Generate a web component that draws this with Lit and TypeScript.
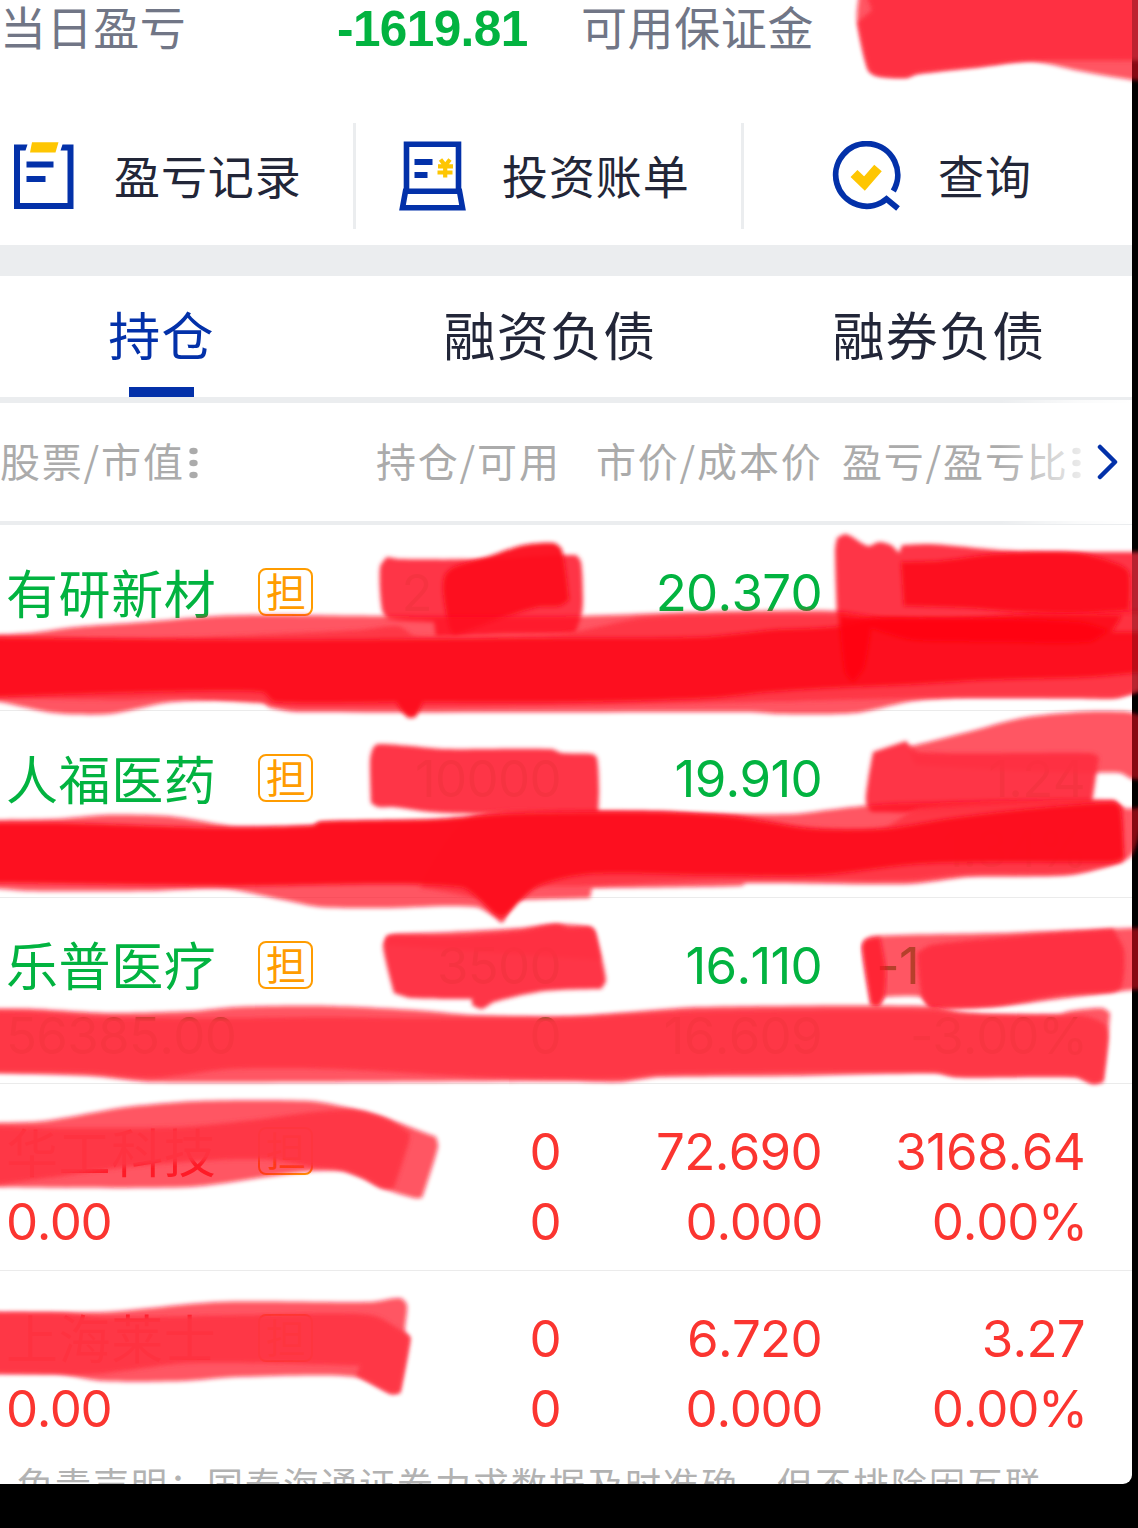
import { LitElement, html, css, svg } from "lit";
import { customElement, property } from "lit/decorators.js";

interface Holding {
  name: string;
  trend: "up" | "down";
  value: string;
  qty: string;
  avail: string;
  price: string;
  cost: string;
  profit: string;
  ratio: string;
  qtyCut?: boolean;
  profitCut?: boolean;
}

const HOLDINGS: Holding[] = [
  { name: "有研新材", trend: "down", value: "", qty: "2", avail: "", price: "20.370", cost: "", profit: "", ratio: "", qtyCut: true },
  { name: "人福医药", trend: "down", value: "", qty: "10000", avail: "", price: "19.910", cost: "", profit: "1.24", ratio: "1.34%" },
  { name: "乐普医疗", trend: "down", value: "56385.00", qty: "3500", avail: "0", price: "16.110", cost: "16.609", profit: "-1", ratio: "-3.00%", profitCut: true },
  { name: "华工科技", trend: "up", value: "0.00", qty: "0", avail: "0", price: "72.690", cost: "0.000", profit: "3168.64", ratio: "0.00%" },
  { name: "上海莱士", trend: "up", value: "0.00", qty: "0", avail: "0", price: "6.720", cost: "0.000", profit: "3.27", ratio: "0.00%" },
];

/* Marker strokes, in paint order: tone name and outline points. */
const MARKS: [string, string][] = [
  // top right
  ["light", "859,-5 857,20 868,70 877,76 906,78 917,74 980,67 1030,61 1080,71 1132,80 1145,81 1145,-5"],
  ["solid", "866,-5 872,10 858,22 869,69 877,75 906,77 917,73 980,66 1030,61 1145,61 1145,-5"],
  // row 1 quantity
  ["solid", "380,567 387,557 400,559 487,559 575,555 581,562 583,597 582,613 575,634 500,634 436,637 434,622 389,619 382,610"],
  ["dark", "445,575 454,567 487,557 523,545 554,543 562,550 569,600 560,606 538,607 502,618 469,630 454,635 449,627 443,590"],
  // row 1 profit
  ["solid", "835,550 837,538 846,534 868,546 879,542 891,545 899,553 902,545 931,544 1015,551 1145,552 1145,640 838,640"],
  ["dark", "901,562 939,561 997,554 1077,553 1120,565 1129,573 1129,610 1080,613 1022,612 968,608 904,606"],
  // row 1 bar
  ["light", "-8,635 30,633 76,627 145,622 218,616 273,615 382,616 575,616 702,612 837,611 900,620 1132,611 1145,611 1145,690 1117,698 1070,698 960,698 913,701 855,713 779,714 750,712 298,712 269,707 262,700 189,701 164,703 109,714 55,713 0,702 -8,702"],
  ["mid", "-8,637 60,637 170,638 360,630 398,626 416,636 560,634 650,617 840,615 900,620 1140,613 1140,690 1117,697 1085,697 960,697 913,698 760,702 568,706 298,708 268,704 180,698 120,700 -8,698"],
  ["dark", "-8,638 262,640 570,638 702,637 772,630 833,627 880,618 960,619 1040,614 1122,615 1112,632 1145,632 1145,672 1091,677 986,680 920,684 830,688 768,692 710,698 570,702 423,702 416,717 409,718 405,715 396,702 275,702 262,692 150,692 -8,697"],
  ["deep", "839,615 871,618 960,618 1080,622 1108,630 1090,642 1000,642 913,640 871,628 864,668 853,682 845,672"],
  // row 2 quantity
  ["solid", "370,760 373,748 378,744 411,746 443,749 551,749 562,753 592,754 597,758 599,790 598,816 473,814 429,812 393,807 378,807 371,803"],
  // row 2 profit
  ["light", "908,747 968,732 1022,718 1077,712 1128,712 1145,717 1145,780 1132,779 1120,773 1085,773 1000,770 915,765"],
  ["solid", "873,752 906,741 919,752 1091,753 1099,757 1091,810 873,812 866,803 868,780"],
  // row 2 bar
  ["light", "-8,820 55,819 105,815 167,816 196,820 233,826 313,825 320,822 436,819 509,813 570,811 659,811 706,814 793,814 844,808 899,803 1113,800 1122,808 1145,807 1138,840 1132,855 1122,862 1070,875 968,877 910,884 746,883 741,886 592,888 590,898 516,900 502,923 476,907 382,908 320,907 284,900 225,889 145,891 29,891 -8,888"],
  ["mid", "470,818 570,812 730,815 811,827 884,827 920,808 1113,801 1124,808 1122,862 1070,873 968,874 910,880 746,880 580,886 526,890 502,922 480,900 420,888"],
  ["dark", "-8,823 65,823 233,828 313,826 320,822 436,820 509,814 659,813 732,817 811,829 884,829 953,818 1040,808 1113,803 1120,808 1124,858 1112,862 1004,862 917,864 819,875 699,875 590,874 538,886 505,915 497,915 460,887 233,886 -8,883"],
  // row 3 quantity
  ["light", "385,945 387,936 396,934 451,932 520,928 556,924 590,927 595,932 600,960"],
  ["solid", "383,947 387,936 396,935 451,936 520,931 556,924 570,928 590,927 595,932 606,980 601,989 545,991 494,1002 482,1009 472,1005 472,999 411,998 394,993"],
  // row 3 profit
  ["light", "862,947 865,940 873,936 1000,933 1132,928 1145,928 1145,989 1113,992 997,1006 931,1007 922,997 884,997 879,1006 871,1005"],
  ["light", "862,947 865,940 880,937 886,970 884,997 879,1006 871,1005"],
  ["solid", "917,953 931,945 1011,937 1113,929 1124,950 1122,986 1113,992 1060,995 997,1006 931,1007 922,997"],
  // row 3 bar
  ["light", "-8,1009 33,1009 109,1013 193,1011 236,1007 327,1006 414,1010 473,1015 570,1016 630,1012 699,1007 931,1006 961,1012 986,1014 1059,1014 1070,1011 1102,1008 1110,1013 1108,1037 1103,1082 1093,1084 1075,1077 957,1077 935,1073 793,1076 659,1077 619,1082 568,1081 153,1082 91,1076 -8,1073"],
  ["mid", "-8,1011 33,1012 109,1017 220,1018 327,1017 414,1018 570,1018 630,1015 699,1011 931,1010 961,1014 1059,1016 1085,1016 1104,1024 1108,1037 1103,1081 1093,1083 1075,1076 957,1076 935,1072 659,1074 619,1079 480,1077 330,1069 230,1069 153,1078 91,1073 -8,1072"],
  // row 4 name
  ["light", "-8,1123 44,1121 127,1107 200,1101 309,1101 345,1107 385,1118 436,1137 438,1147 422,1198 414,1198 382,1188 363,1178 342,1171 313,1171 273,1176 189,1187 -8,1187"],
  ["mid", "-8,1126 60,1128 182,1127 254,1120 313,1112 356,1110 385,1118 410,1133 409,1142 394,1188 382,1188 363,1178 342,1170 313,1167 270,1160 218,1160 127,1167 55,1177 -8,1185"],
  // row 5 name
  ["light", "-8,1312 105,1312 218,1302 371,1302 400,1298 407,1305 405,1332 410,1337 400,1393 391,1394 356,1377 236,1377 182,1381 102,1381 58,1374 -8,1374"],
  ["mid", "-8,1313 60,1313 105,1317 247,1315 371,1315 405,1333 410,1339 400,1392 391,1393 356,1375 360,1366 189,1363 95,1374 -8,1373"],
];

/* Closed outline through the points: gentle bends are curved, sharp corners stay sharp. */
function smooth(points: string): string {
  const p = points.split(" ").map((s) => s.split(",").map(Number));
  const n = p.length;
  const tangent = p.map((c, i) => {
    const a = p[(i + n - 1) % n];
    const b = p[(i + 1) % n];
    const u = [c[0] - a[0], c[1] - a[1]];
    const v = [b[0] - c[0], b[1] - c[1]];
    const lu = Math.hypot(u[0], u[1]);
    const lv = Math.hypot(v[0], v[1]);
    if ((u[0] * v[0] + u[1] * v[1]) / (lu * lv) < 0.6) return [0, 0];
    const t = [(u[0] / lu) * lu + (v[0] / lv) * lv, (u[1] / lu) * lu + (v[1] / lv) * lv];
    const lt = Math.hypot(t[0], t[1]);
    return [t[0] / lt, t[1] / lt];
  });
  let d = `M${p[0][0]} ${p[0][1]}`;
  for (let i = 0; i < n; i++) {
    const j = (i + 1) % n;
    const k = Math.hypot(p[j][0] - p[i][0], p[j][1] - p[i][1]) * 0.26;
    const c1 = [p[i][0] + tangent[i][0] * k, p[i][1] + tangent[i][1] * k];
    const c2 = [p[j][0] - tangent[j][0] * k, p[j][1] - tangent[j][1] * k];
    d += `C${c1.map((x) => x.toFixed(1)).join(" ")} ${c2.map((x) => x.toFixed(1)).join(" ")} ${p[j].join(" ")}`;
  }
  return d + "Z";
}

const dots = (cls: string) => html`<svg class=${cls} width="9" height="32" viewBox="0 0 9 32">
  ${[4, 16, 28].map((y) => svg`<ellipse cx="4.5" cy=${y} rx="4.2" ry="3.3" fill="currentColor" />`)}
</svg>`;

const recordIcon = html`<svg width="60" height="68" viewBox="0 0 60 68">
  <path d="M13.500 2.500H0V67H59.500V2.500H48.500L46.500 8.500H53.500V61H6V8.500H11.500Z" fill="#0331a9" />
  <path d="M18 .3H44.500L41.500 10.500H16Z" fill="#fec602" />
  <path d="M12.500 19.500H39.500V25.500H12.500ZM12.500 34H31.500V40H12.500Z" fill="#0331a9" />
</svg>`;

const billIcon = html`<svg width="67" height="70" viewBox="0 0 67 70">
  <g fill="none" stroke="#0331a9" stroke-width="5.600">
    <path d="M7.500 50V3.300H59.500V50" />
    <path d="M6.500 50.300H60.500L63.500 66.700H3.500Z" />
  </g>
  <path d="M15.500 18H33.500V24H15.500ZM15.500 31H28.500V37H15.500Z" fill="#0331a9" />
  <path d="M41.500 18.500L46.200 24.500L51 18.500M39 25.300H54M38.500 31.500H53.500M46.200 24V36.500" fill="none" stroke="#fec602" stroke-width="4.200" />
</svg>`;

const queryIcon = html`<svg width="70" height="70" viewBox="0 0 70 70">
  <path d="M61.300 50A31 31.300 0 1 0 54.500 58L66 67.500" fill="none" stroke="#0331a9" stroke-width="5.800" />
  <path d="M22 32.500L32.500 42.500L46 27" fill="none" stroke="#fec602" stroke-width="10" />
</svg>`;

@customElement("holding-row")
class HoldingRow extends LitElement {
  @property({ attribute: false }) item!: Holding;

  static styles = css`
    :host { display: block; }
    :host(.last) .row { border-bottom-color: transparent; }
    .row {
      box-sizing: border-box;
      height: 186.400px;
      padding: 33px 47px 0 6px;
      border-bottom: 1.500px solid #ebebeb;
      display: grid;
      grid-template-columns: 374px 181px 261px 263px;
      grid-template-rows: 70px 70px;
      align-items: center;
      font: 400 51px/70px Inter, "Noto Sans CJK SC", sans-serif;
      font-kerning: none;
      font-feature-settings: "calt" 0;
      letter-spacing: -.7px;
    }
    .up { color: #fb3530; }
    .down { color: #02b340; }
    .num { text-align: right; white-space: nowrap; }
    .name { display: flex; align-items: center; gap: 42px; margin-top: -2px; }
    .title { font: 400 52px/68px "Noto Sans CJK SC", sans-serif; letter-spacing: .6px; margin-top: -1px; }
    .tag {
      box-sizing: border-box;
      width: 55px; height: 48px;
      border: 2.500px solid #ff9c00;
      border-radius: 8px;
      color: #ff9c00;
      font: 400 40px/41px "Noto Sans CJK SC", sans-serif;
      text-align: center;
      letter-spacing: 0;
    }
    .value { letter-spacing: -1.500px; }
    .second { letter-spacing: -1.400px; }
    .ratio { letter-spacing: -1.200px; margin-right: -2px; }
    .down .value, .down .second { letter-spacing: -.7px; }
    .qty-cut { padding-right: 129px; }
    .profit-cut { padding-right: 166px; }
  `;

  render() {
    const h = this.item;
    return html`<div class="row ${h.trend}">
      <div class="name"><span class="title">${h.name}</span><span class="tag">担</span></div>
      <div class="num ${h.qtyCut ? "qty-cut" : ""}">${h.qty}</div>
      <div class="num">${h.price}</div>
      <div class="num ${h.profitCut ? "profit-cut" : ""}">${h.profit}</div>
      <div class="value">${h.value}</div>
      <div class="num">${h.avail}</div>
      <div class="num second">${h.cost}</div>
      <div class="num ratio">${h.ratio}</div>
    </div>`;
  }
}

@customElement("app-root")
class AppRoot extends LitElement {
  static styles = css`
    :host { display: block; }
    .stage {
      position: relative;
      width: 1138px; height: 1528px;
      background: #000;
      overflow: hidden;
      font-family: "Noto Sans CJK SC", sans-serif;
    }
    .panel {
      width: 1132px; height: 1484px;
      background: #fff;
      border-bottom-right-radius: 9px;
      overflow: hidden;
      display: flex;
      flex-direction: column;
    }
    .panel > * { flex: none; }
    .summary {
      height: 123px;
      display: grid;
      grid-template-columns: 337px 244px 551px;
      font-size: 46px;
      line-height: 50px;
      color: #717686;
      letter-spacing: .6px;
      box-sizing: border-box;
    }
    .amount {
      font: 700 49.500px/58px "Liberation Sans", Arial, sans-serif;
      color: #02b340;
      letter-spacing: -.6px;
    }
    .actions { height: 122px; display: flex; align-items: flex-start; }
    .action {
      box-sizing: border-box;
      height: 106px;
      display: flex;
      align-items: center;
      font-size: 46px;
      letter-spacing: .9px;
      color: #222638;
      line-height: 102px;
    }
    .action span { height: 106px; }
    .record { width: 356px; padding-left: 14px; gap: 40px; border-right: 3px solid #ebedef; }
    .bill { width: 388px; padding-left: 43px; gap: 36px; border-right: 3px solid #ebedef; }
    .query { padding-left: 88px; gap: 36px; }
    .gap { height: 31px; background: #ebedef; }
    .tabs {
      height: 121px;
      display: grid;
      grid-template-columns: 323px 454px 324px;
      color: #222638;
      font-size: 52px;
      letter-spacing: 1.300px;
    }
    .tab {
      display: flex;
      flex-direction: column;
      justify-content: space-between;
      align-items: center;
      line-height: 116px;
      height: 121px;
      white-space: nowrap;
    }
    .tab span { height: 111px; }
    .active { color: #0331a9; }
    .bar { width: 65px; height: 10px; background: #0331a9; }
    .head {
      position: relative;
      box-sizing: border-box;
      height: 128px;
      border-top: 6px solid #ebedef;
      border-bottom: 4px solid #ebedef;
      display: grid;
      grid-template-columns: 376px 220px 246px 290px;
      align-items: start;
      color: #ababab;
      font-size: 40px;
      letter-spacing: 1.800px;
      white-space: nowrap;
    }
    .head div { display: flex; align-items: center; line-height: 115px; height: 115px; }
    .dots { margin: 4px 0 0 4px; }
    .fade {
      position: absolute;
      right: 0; top: -3px;
      width: 132px; height: 124px;
      background: linear-gradient(90deg, rgba(255,255,255,0), rgba(255,255,255,.75) 60%, #fff);
    }
    .chevron { position: absolute; left: 1097px; top: 41px; }
    .note {
      padding-left: 17px;
      height: 60px;
      line-height: 52px;
      font-size: 36px;
      letter-spacing: 2px;
      color: #b2b2b2;
      white-space: nowrap;
    }
    .marker { position: absolute; left: 0; top: 0; pointer-events: none; }
    .light { fill: #ff0a22; fill-opacity: .71; }
    .mid { fill: #fe3344; fill-opacity: .91; }
    .solid { fill: #fe3041; fill-opacity: .97; }
    .dark { fill: #fd101b; fill-opacity: .96; }
    .deep { fill: #ff030a; fill-opacity: .85; }
  `;

  render() {
    return html`<div class="stage">
      <div class="panel">
        <div class="summary">
          <span>当日盈亏</span><span class="amount">-1619.81</span><span>可用保证金</span>
        </div>
        <div class="actions">
          <div class="action record">${recordIcon}<span>盈亏记录</span></div>
          <div class="action bill">${billIcon}<span>投资账单</span></div>
          <div class="action query">${queryIcon}<span>查询</span></div>
        </div>
        <div class="gap"></div>
        <div class="tabs">
          <div class="tab active"><span>持仓</span><i class="bar"></i></div>
          <div class="tab"><span>融资负债</span></div>
          <div class="tab"><span>融券负债</span></div>
        </div>
        <div class="head">
          <div>股票/市值${dots("dots")}</div>
          <div>持仓/可用</div>
          <div>市价/成本价</div>
          <div>盈亏/盈亏比${dots("dots")}</div>
          <span class="fade"></span>
          <svg class="chevron" width="22" height="36" viewBox="0 0 22 36">
            <path d="M3 3L18 18L3 33" fill="none" stroke="#0331a9" stroke-width="4.500" stroke-linecap="round" stroke-linejoin="round" />
          </svg>
        </div>
        ${HOLDINGS.map((h, i) => html`<holding-row class=${i === HOLDINGS.length - 1 ? "last" : ""} .item=${h}></holding-row>`)}
        <div class="note">免责声明：国泰海通证券力求数据及时准确，但不排除因互联</div>
      </div>
      <svg class="marker" width="1138" height="1528" viewBox="0 0 1138 1528">
        <defs>
          <filter id="soft" x="-5%" y="-20%" width="110%" height="140%"><feGaussianBlur stdDeviation="2" /></filter>
        </defs>
        ${MARKS.map(([tone, pts]) => svg`<path class=${tone} d=${smooth(pts)} filter="url(#soft)" />`)}
        <rect x="1132" y="0" width="6" height="1528" fill="#000" fill-opacity=".25" />
      </svg>
    </div>`;
  }
}
